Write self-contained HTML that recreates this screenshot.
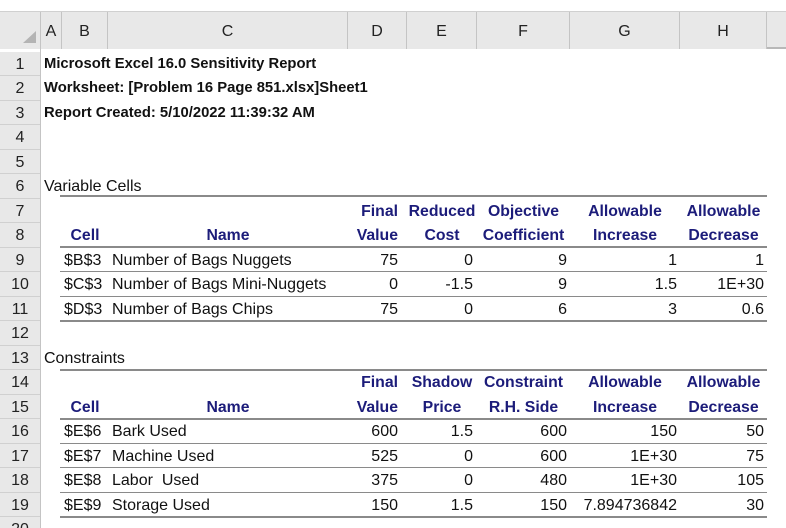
<!DOCTYPE html>
<html><head><meta charset="utf-8"><style>
*{margin:0;padding:0;box-sizing:border-box}
html,body{width:786px;height:528px;overflow:hidden}
body{background:#fff;font-family:"Liberation Sans",Arial,sans-serif;font-size:16px;color:#111;position:relative}
.a{position:absolute;white-space:nowrap;height:24.5px;line-height:25px}
.r{text-align:right}.c{text-align:center}
.b{font-weight:bold;font-size:14.8px}
.h{color:#1c1c7a;font-weight:bold;font-size:15.8px}
.rh{position:absolute;left:0;width:40px;height:24.5px;line-height:25px;text-align:center;background:#e8e8e8;border-bottom:1px solid #d0d0d0;font-size:16px;color:#222}
.ch{position:absolute;top:12px;height:37px;line-height:40px;text-align:center;background:#e8e8e8;border-right:1px solid #c4c4c4;font-size:16px;color:#222}
.ln{position:absolute;left:60px;width:707px;background:#8a8a8a}
</style></head><body>
<div style="position:absolute;left:0;top:0;width:786px;height:12px;background:#fff;border-bottom:1px solid #d0d0d0"></div>
<div style="position:absolute;left:0;top:12px;width:786px;height:37px;background:#e8e8e8;border-bottom:2px solid #b8b8b8"></div>
<div class="ch" style="left:0;width:41px"></div>
<svg style="position:absolute;left:22px;top:30px" width="16" height="14"><polygon points="14,1 14,13 1,13" fill="#b4b4b4"/></svg>
<div class="ch" style="left:41px;width:21px">A</div>
<div class="ch" style="left:62px;width:46px">B</div>
<div class="ch" style="left:108px;width:240px">C</div>
<div class="ch" style="left:348px;width:59px">D</div>
<div class="ch" style="left:407px;width:70px">E</div>
<div class="ch" style="left:477px;width:93px">F</div>
<div class="ch" style="left:570px;width:110px">G</div>
<div class="ch" style="left:680px;width:87px">H</div>
<div style="position:absolute;left:40px;top:49px;width:1px;height:479px;background:#c4c4c4"></div>

<div class="rh" style="top:51.5px">1</div><div class="rh" style="top:76px">2</div><div class="rh" style="top:100.5px">3</div><div class="rh" style="top:125px">4</div><div class="rh" style="top:149.5px">5</div><div class="rh" style="top:174px">6</div><div class="rh" style="top:198.5px">7</div><div class="rh" style="top:223px">8</div><div class="rh" style="top:247.5px">9</div><div class="rh" style="top:272px">10</div><div class="rh" style="top:296.5px">11</div><div class="rh" style="top:321px">12</div><div class="rh" style="top:345.5px">13</div><div class="rh" style="top:370px">14</div><div class="rh" style="top:394.5px">15</div><div class="rh" style="top:419px">16</div><div class="rh" style="top:443.5px">17</div><div class="rh" style="top:468px">18</div><div class="rh" style="top:492.5px">19</div><div class="rh" style="top:517px">20</div>

<div class="a b" style="left:44px;top:51.5px">Microsoft Excel 16.0 Sensitivity Report</div>
<div class="a b" style="left:44px;top:76px">Worksheet: [Problem 16 Page 851.xlsx]Sheet1</div>
<div class="a b" style="left:44px;top:100.5px">Report Created: 5/10/2022 11:39:32 AM</div>

<div class="a" style="left:44px;top:174px">Variable Cells</div>
<div class="ln" style="top:195px;height:2px"></div>
<div class="a h r" style="left:340px;width:58px;top:198.5px">Final</div>
<div class="a h c" style="left:402px;width:80px;top:198.5px">Reduced</div>
<div class="a h c" style="left:472px;width:103px;top:198.5px">Objective</div>
<div class="a h c" style="left:570px;width:110px;top:198.5px">Allowable</div>
<div class="a h c" style="left:680px;width:87px;top:198.5px">Allowable</div>
<div class="a h c" style="left:62px;width:46px;top:223px">Cell</div>
<div class="a h c" style="left:108px;width:240px;top:223px">Name</div>
<div class="a h r" style="left:340px;width:58px;top:223px">Value</div>
<div class="a h c" style="left:402px;width:80px;top:223px">Cost</div>
<div class="a h c" style="left:472px;width:103px;top:223px">Coefficient</div>
<div class="a h c" style="left:570px;width:110px;top:223px">Increase</div>
<div class="a h c" style="left:680px;width:87px;top:223px">Decrease</div>
<div class="ln" style="top:246px;height:2px"></div>
<div class="ln" style="top:271px;height:1px"></div>
<div class="ln" style="top:296px;height:1px"></div>
<div class="ln" style="top:320px;height:2px"></div>

<div class="a" style="left:64px;top:247.5px">$B$3</div><div class="a" style="left:112px;top:247.5px">Number of Bags Nuggets</div>
<div class="a r" style="left:348px;width:50px;top:247.5px">75</div><div class="a r" style="left:407px;width:66px;top:247.5px">0</div><div class="a r" style="left:477px;width:90px;top:247.5px">9</div><div class="a r" style="left:570px;width:107px;top:247.5px">1</div><div class="a r" style="left:680px;width:84px;top:247.5px">1</div>
<div class="a" style="left:64px;top:272px">$C$3</div><div class="a" style="left:112px;top:272px">Number of Bags Mini-Nuggets</div>
<div class="a r" style="left:348px;width:50px;top:272px">0</div><div class="a r" style="left:407px;width:66px;top:272px">-1.5</div><div class="a r" style="left:477px;width:90px;top:272px">9</div><div class="a r" style="left:570px;width:107px;top:272px">1.5</div><div class="a r" style="left:680px;width:84px;top:272px">1E+30</div>
<div class="a" style="left:64px;top:296.5px">$D$3</div><div class="a" style="left:112px;top:296.5px">Number of Bags Chips</div>
<div class="a r" style="left:348px;width:50px;top:296.5px">75</div><div class="a r" style="left:407px;width:66px;top:296.5px">0</div><div class="a r" style="left:477px;width:90px;top:296.5px">6</div><div class="a r" style="left:570px;width:107px;top:296.5px">3</div><div class="a r" style="left:680px;width:84px;top:296.5px">0.6</div>

<div class="a" style="left:44px;top:345.5px">Constraints</div>
<div class="ln" style="top:369px;height:2px"></div>
<div class="a h r" style="left:340px;width:58px;top:370px">Final</div>
<div class="a h c" style="left:402px;width:80px;top:370px">Shadow</div>
<div class="a h c" style="left:472px;width:103px;top:370px">Constraint</div>
<div class="a h c" style="left:570px;width:110px;top:370px">Allowable</div>
<div class="a h c" style="left:680px;width:87px;top:370px">Allowable</div>
<div class="a h c" style="left:62px;width:46px;top:394.5px">Cell</div>
<div class="a h c" style="left:108px;width:240px;top:394.5px">Name</div>
<div class="a h r" style="left:340px;width:58px;top:394.5px">Value</div>
<div class="a h c" style="left:402px;width:80px;top:394.5px">Price</div>
<div class="a h c" style="left:472px;width:103px;top:394.5px">R.H. Side</div>
<div class="a h c" style="left:570px;width:110px;top:394.5px">Increase</div>
<div class="a h c" style="left:680px;width:87px;top:394.5px">Decrease</div>
<div class="ln" style="top:418px;height:2px"></div>
<div class="ln" style="top:443px;height:1px"></div>
<div class="ln" style="top:467px;height:1px"></div>
<div class="ln" style="top:492px;height:1px"></div>
<div class="ln" style="top:516px;height:2px"></div>

<div class="a" style="left:64px;top:419px">$E$6</div><div class="a" style="left:112px;top:419px">Bark Used</div>
<div class="a r" style="left:348px;width:50px;top:419px">600</div><div class="a r" style="left:407px;width:66px;top:419px">1.5</div><div class="a r" style="left:477px;width:90px;top:419px">600</div><div class="a r" style="left:570px;width:107px;top:419px">150</div><div class="a r" style="left:680px;width:84px;top:419px">50</div>
<div class="a" style="left:64px;top:443.5px">$E$7</div><div class="a" style="left:112px;top:443.5px">Machine Used</div>
<div class="a r" style="left:348px;width:50px;top:443.5px">525</div><div class="a r" style="left:407px;width:66px;top:443.5px">0</div><div class="a r" style="left:477px;width:90px;top:443.5px">600</div><div class="a r" style="left:570px;width:107px;top:443.5px">1E+30</div><div class="a r" style="left:680px;width:84px;top:443.5px">75</div>
<div class="a" style="left:64px;top:468px">$E$8</div><div class="a" style="left:112px;top:468px">Labor&nbsp; Used</div>
<div class="a r" style="left:348px;width:50px;top:468px">375</div><div class="a r" style="left:407px;width:66px;top:468px">0</div><div class="a r" style="left:477px;width:90px;top:468px">480</div><div class="a r" style="left:570px;width:107px;top:468px">1E+30</div><div class="a r" style="left:680px;width:84px;top:468px">105</div>
<div class="a" style="left:64px;top:492.5px">$E$9</div><div class="a" style="left:112px;top:492.5px">Storage Used</div>
<div class="a r" style="left:348px;width:50px;top:492.5px">150</div><div class="a r" style="left:407px;width:66px;top:492.5px">1.5</div><div class="a r" style="left:477px;width:90px;top:492.5px">150</div><div class="a r" style="left:570px;width:107px;top:492.5px">7.894736842</div><div class="a r" style="left:680px;width:84px;top:492.5px">30</div>
</body></html>
